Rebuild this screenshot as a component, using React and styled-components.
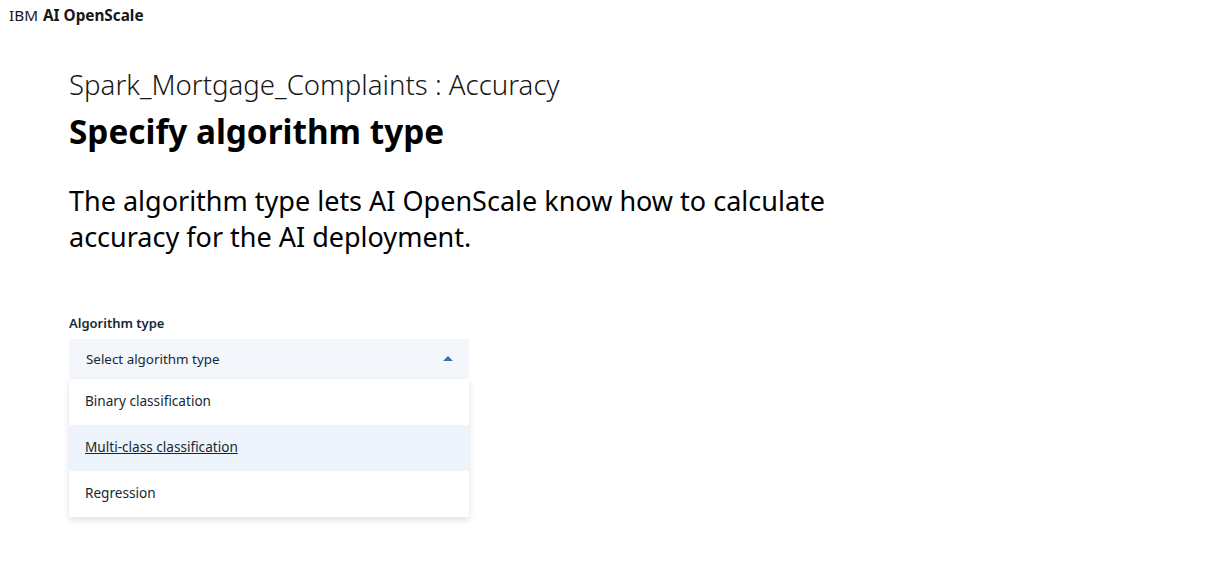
import styled, { createGlobalStyle } from "styled-components";

const GlobalStyle = createGlobalStyle`
  body {
    margin: 0;
    background: #ffffff;
    font-family: "Noto Sans", "Open Sans", sans-serif;
    color: #171717;
  }
`;

const options = [
  { label: "Binary classification" },
  { label: "Multi-class classification", active: true },
  { label: "Regression" },
];

const App = () => {
  return (
    <>
      <GlobalStyle />
      <Header>
        <span>IBM</span>
        <strong>AI OpenScale</strong>
      </Header>
      <Main>
        <Eyebrow>Spark_Mortgage_Complaints : Accuracy</Eyebrow>
        <Title>Specify algorithm type</Title>
        <Lead>
          The algorithm type lets AI OpenScale know how to calculate
          accuracy for the AI deployment.
        </Lead>
        <Field>
          <Label>Algorithm type</Label>
          <Dropdown>
            <DropdownButton>
              <span>Select algorithm type</span>
              <svg width="10" height="5" viewBox="0 0 10 5">
                <path d="M0 5 L5 0 L10 5 Z" fill="#3d70b2" />
              </svg>
            </DropdownButton>
            <Menu>
              {options.map((o) => (
                <MenuItem key={o.label} $active={o.active}>
                  {o.label}
                </MenuItem>
              ))}
            </Menu>
          </Dropdown>
        </Field>
      </Main>
    </>
  );
};

const Header = styled.header`
  display: flex;
  align-items: center;
  gap: 5px;
  height: 30px;
  padding: 0 9px;
  font-size: 15.3px;
  color: #171717;

  & strong {
    font-weight: 700;
  }
`;

const Main = styled.main`
  display: flex;
  flex-direction: column;
  padding: 36px 69px;
`;

const Eyebrow = styled.h2`
  margin: 0;
  font-size: 27.6px;
  font-weight: 300;
  line-height: 36px;
  color: #171717;
`;

const Title = styled.h1`
  margin: 9px 0 0;
  font-size: 33.3px;
  font-weight: 700;
  line-height: 40px;
  color: #000;
`;

const Lead = styled.p`
  margin: 32px 0 0;
  max-width: 780px;
  font-size: 27px;
  font-weight: 400;
  line-height: 36px;
  color: #000;
`;

const Field = styled.div`
  display: flex;
  flex-direction: column;
  margin-top: 60px;
  width: 400px;
`;

const Label = styled.label`
  font-size: 13px;
  font-weight: 600;
  line-height: 16px;
  color: #152935;
  margin-bottom: 8px;
`;

const Dropdown = styled.div`
  position: relative;
`;

const DropdownButton = styled.div`
  display: flex;
  align-items: center;
  justify-content: space-between;
  height: 40px;
  padding: 0 16px 0 17px;
  background: #f3f6fb;
  font-size: 13.4px;
  color: #152935;

  & span {
    margin-bottom: 1px;
  }

  & svg {
    margin-bottom: 2px;
  }
`;

const Menu = styled.ul`
  list-style: none;
  margin: 0;
  padding: 0;
  background: #fff;
  box-shadow: 0 3px 6px rgba(0, 0, 0, 0.12);
`;

const MenuItem = styled.li`
  display: flex;
  align-items: center;
  height: 46px;
  padding: 0 16px 3px;
  box-sizing: border-box;
  font-size: 13.6px;
  color: #152935;
  background: ${(p) => (p.$active ? "#eef4fc" : "#fff")};
  text-decoration: ${(p) => (p.$active ? "underline" : "none")};
`;

export default App;
